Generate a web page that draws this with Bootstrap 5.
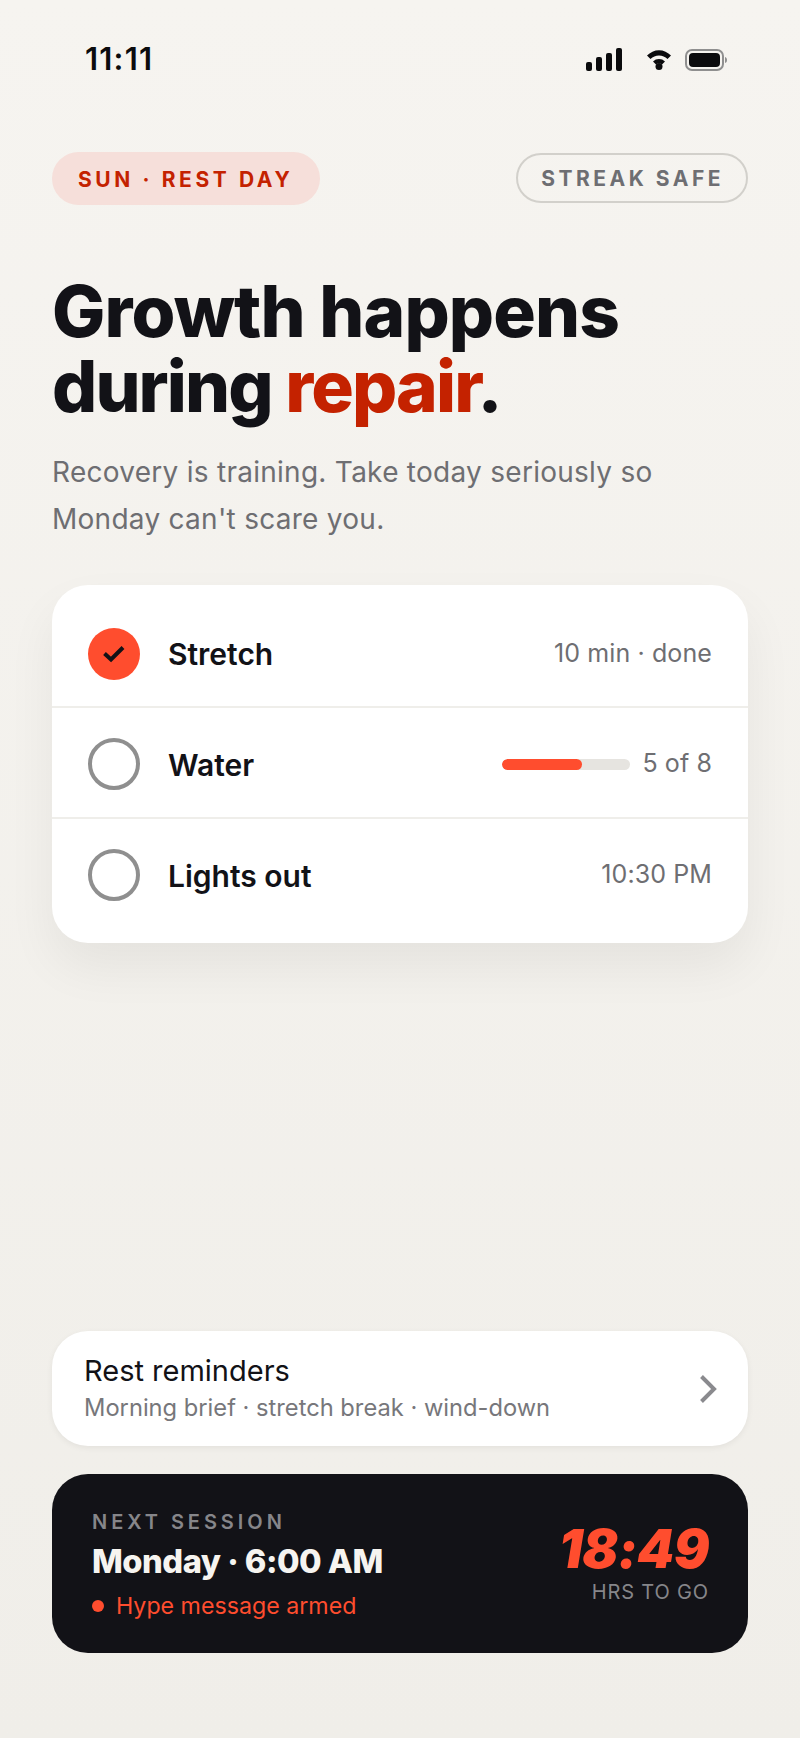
<!DOCTYPE html>
<html lang="en">
<head>
<meta charset="utf-8">
<title>Rest day</title>
<link href="https://cdn.jsdelivr.net/npm/bootstrap@5.3.0/dist/css/bootstrap.min.css" rel="stylesheet">
<style>
html,body{height:100%;}
body{margin:0;background:linear-gradient(180deg,#f6f4f0 0%,#f0eee9 100%);font-family:Inter,"Liberation Sans",sans-serif;color:#121217;}
.screen{width:800px;height:1738px;padding:0 52px 85px;}
.status{height:152px;padding:43px 21px 0 33px;align-items:flex-start;}
.clock{font-size:31px;line-height:32px;font-weight:600;color:#0b0b0d;letter-spacing:1.2px;}
.status-icons{margin-top:5px;}
.wifi-mark{margin-left:25px;}
.battery-mark{margin-left:14px;}
.pill-rest{height:53px;background:#f6dfda;color:#c42200;border-radius:27px;padding:2px 27px 0 26px;font-size:21px;font-weight:700;letter-spacing:3.6px;}
.pill-safe{height:50px;margin-top:-1px;border:2px solid #d2d0cb;color:#6e6e72;border-radius:25px;padding:2px 22px 0 23px;font-size:21px;font-weight:700;letter-spacing:3.5px;}
.headline{margin:69px 0 0;font-size:71px;line-height:75px;font-weight:800;letter-spacing:-.9px;color:#121217;font-family:Inter,"Liberation Sans",sans-serif;}
.headline-second{display:block;letter-spacing:-1.9px;}
.accent{color:#c42200;}
.intro{margin:25px 0 0;font-size:28px;line-height:47px;color:#6e6e72;letter-spacing:.27px;}
.todo{margin-top:42px;background:#fff;border-radius:36px;box-shadow:0 24px 50px rgba(18,18,23,.06);border:0;overflow:hidden;}
.todo-row{height:111px;padding:3px 36px 0;gap:28px;border-bottom:2px solid #efeeea;}
.todo-row:first-child{height:123px;padding-top:16px;}
.todo-row:last-child{border-bottom:0;height:124px;padding:0 36px 12px;}
.tick{width:52px;height:52px;border-radius:50%;flex:none;}
.tick-on{background:#ff4d2e;}
.tick-off{border:4px solid #8f8f8f;}
.todo-name{font-size:30px;font-weight:600;color:#121217;padding-top:2px;}
.todo-meta{font-size:25px;color:#6e6e72;letter-spacing:.1px;}
.bar-track{width:128px;height:11px;background:#e6e4e0;border-radius:6px;overflow:hidden;}
.bar-fill{height:100%;background:#ff4d2e;border-radius:6px;}
.reminder{height:115px;background:#fff;border-radius:36px;box-shadow:0 2px 6px rgba(18,18,23,.06);padding:0 31px 0 32px;}
.reminder-title{font-size:29px;line-height:36px;color:#121217;}
.reminder-sub{font-size:23.7px;line-height:32px;margin-top:3px;color:#77777b;}
.session{margin-top:28px;height:179px;background:#121217;border-radius:36px;padding:36px 39px 0 40px;color:#f6f4f0;align-items:flex-start;}
.session-label{font-size:20px;line-height:24px;font-weight:600;letter-spacing:3.95px;color:#86868a;}
.session-when{font-size:32.7px;line-height:44px;margin-top:5px;font-weight:800;letter-spacing:-.5px;}
.session-note{font-size:23.2px;line-height:30px;margin-top:8px;color:#ff4d2e;gap:12px;}
.dot{width:12px;height:12px;border-radius:50%;background:#ff4d2e;}
.count{font-size:53px;line-height:56px;margin-top:11px;font-weight:900;font-style:italic;color:#ff4d2e;letter-spacing:-.5px;}
.count-label{font-size:20px;line-height:26px;margin-top:2px;color:#86868a;letter-spacing:.85px;}
</style>
</head>
<body>
<div class="screen d-flex flex-column">
  <div class="status d-flex justify-content-between">
    <div class="clock">11:11</div>
    <div class="status-icons d-flex align-items-center">
      <svg width="36" height="23" viewBox="0 0 36 23"><rect x="0" y="14" width="6" height="9" rx="2" fill="#0b0b0d"/><rect x="10" y="9" width="6" height="14" rx="2" fill="#0b0b0d"/><rect x="20" y="5" width="6" height="18" rx="2" fill="#0b0b0d"/><rect x="30" y="0" width="6" height="23" rx="2" fill="#0b0b0d"/></svg>
      <svg width="24" height="21" viewBox="0 0 24 21" class="wifi-mark"><path d="M0 6.500A16.500 16.500 0 0 1 24 6.500L20.500 10A12 12 0 0 0 3.500 10Z" fill="#0b0b0d"/><path d="M6 12.500A8.500 8.500 0 0 1 18 12.500L15 15.500A4.500 4.500 0 0 0 9 15.500Z" fill="#0b0b0d"/><circle cx="12" cy="17.500" r="3.500" fill="#0b0b0d"/></svg>
      <svg width="42" height="22" viewBox="0 0 42 22" class="battery-mark"><rect x="1" y="1" width="37" height="20" rx="6" fill="none" stroke="#8f8f8f" stroke-width="2"/><rect x="4" y="4" width="31" height="14" rx="4" fill="#0b0b0d"/><path d="M40 8c1.500.5 2 1.500 2 3s-.5 2.500-2 3Z" fill="#8f8f8f"/></svg>
    </div>
  </div>
  <div class="d-flex justify-content-between align-items-center">
    <div class="pill-rest d-flex align-items-center text-nowrap">SUN · REST DAY</div>
    <div class="pill-safe d-flex align-items-center text-nowrap">STREAK SAFE</div>
  </div>
  <h1 class="headline">Growth happens<span class="headline-second">during <span class="accent">repair</span>.</span></h1>
  <p class="intro">Recovery is training. Take today seriously so<br>Monday can't scare you.</p>
  <div class="todo card">
    <div class="todo-row d-flex align-items-center">
      <div class="tick tick-on d-flex align-items-center justify-content-center">
        <svg width="24" height="20" viewBox="0 0 24 20"><path d="M2.500 9.500L9 15.500L21 3.500" fill="none" stroke="#121217" stroke-width="4"/></svg>
      </div>
      <div class="todo-name flex-grow-1">Stretch</div>
      <div class="todo-meta">10 min · done</div>
    </div>
    <div class="todo-row d-flex align-items-center">
      <div class="tick tick-off"></div>
      <div class="todo-name flex-grow-1">Water</div>
      <div class="d-flex align-items-center gap-2">
        <div class="bar-track me-1"><div class="bar-fill" style="width:62.5%"></div></div>
        <div class="todo-meta">5 of 8</div>
      </div>
    </div>
    <div class="todo-row d-flex align-items-center">
      <div class="tick tick-off"></div>
      <div class="todo-name flex-grow-1">Lights out</div>
      <div class="todo-meta">10:30 PM</div>
    </div>
  </div>
  <div class="reminder d-flex align-items-center justify-content-between mt-auto">
    <div>
      <div class="reminder-title">Rest reminders</div>
      <div class="reminder-sub">Morning brief · stretch break · wind-down</div>
    </div>
    <svg width="18" height="30" viewBox="0 0 18 30"><path d="M2.500 2.500L15 15L2.500 27.500" fill="none" stroke="#8a8a8e" stroke-width="4"/></svg>
  </div>
  <div class="session d-flex justify-content-between">
    <div>
      <div class="session-label">NEXT SESSION</div>
      <div class="session-when">Monday · 6:00 AM</div>
      <div class="session-note d-flex align-items-center"><span class="dot"></span>Hype message armed</div>
    </div>
    <div class="text-end">
      <div class="count">18:49</div>
      <div class="count-label">HRS TO GO</div>
    </div>
  </div>
</div>
</body>
</html>
